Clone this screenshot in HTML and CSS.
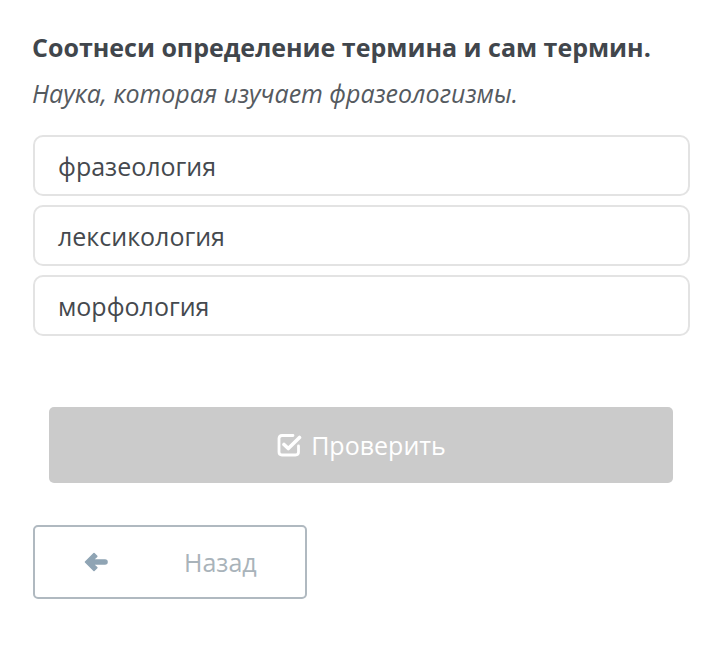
FILE: index.html
```html
<!DOCTYPE html>
<html lang="ru">
<head>
<meta charset="utf-8">
<link rel="stylesheet" href="styles.css">
</head>
<body>
<div class="page">
  <h1 class="title">Соотнеси определение термина и сам термин.</h1>
  <p class="subtitle">Наука, которая изучает фразеологизмы.</p>
  <div class="options">
    <div class="option">фразеология</div>
    <div class="option">лексикология</div>
    <div class="option">морфология</div>
  </div>
  <div class="check-wrap">
    <div class="check-btn">
      <svg class="check-icon" viewBox="0 0 26 26" width="26" height="26">
        <path d="M17 3.5 L6 3.5 Q3 3.5 3 6.5 L3 20 Q3 23 6 23 L19.5 23 Q22.5 23 22.5 20 L22.5 14" fill="none" stroke="#fff" stroke-width="2.8" stroke-linecap="round"/>
        <path d="M8 12.5 L12.3 16.5 L23.5 5.5" fill="none" stroke="#fff" stroke-width="3.6" stroke-linecap="round" stroke-linejoin="round"/>
      </svg>
      <span>Проверить</span>
    </div>
  </div>
  <div class="back-btn">
    <svg class="arrow" viewBox="0 0 26 24" width="26" height="24">
      <path d="M2.5 12 L11 3.5 L13.8 6.3 L9.8 10 L22 10 Q24 10 24 12 Q24 14 22 14 L9.8 14 L13.8 17.7 L11 20.5 Z" fill="#8fa4b4" stroke="#8fa4b4" stroke-width="1.6" stroke-linejoin="round"/>
    </svg>
    <span class="back-text">Назад</span>
  </div>
</div>
</body>
</html>
```
FILE: styles.css
```css
html, body {
  margin: 0;
  padding: 0;
  background: #fff;
}
body {
  font-family: "Open Sans", "Noto Sans", sans-serif;
  color: #444a50;
}
.page {
  padding: 30px 30px 0 32px;
}
.title {
  margin: 0;
  font-size: 25px;
  font-weight: 700;
  line-height: 34px;
  color: #41464c;
}
.subtitle {
  margin: 12px 0 0 0;
  font-size: 25px;
  font-style: italic;
  line-height: 34px;
  color: #555a5f;
}
.options {
  margin-top: 25px;
  display: flex;
  flex-direction: column;
  gap: 9px;
}
.option {
  height: 57px;
  border: 2px solid #e3e3e3;
  border-radius: 10px;
  margin-left: 1px;
  padding-left: 23px;
  display: flex;
  align-items: center;
  font-size: 25px;
  color: #45494e;
}
.check-wrap {
  margin-top: 71px;
  padding: 0 17px;
}
.check-btn {
  height: 76px;
  background: #cbcbcb;
  border-radius: 5px;
  display: flex;
  align-items: center;
  justify-content: center;
  gap: 9px;
  color: #fff;
  font-size: 25px;
}
.check-icon {
  display: block;
}
.back-btn {
  margin-top: 42px;
  margin-left: 1px;
  width: 270px;
  height: 70px;
  border: 2px solid #b0b9c0;
  border-radius: 5px;
  display: flex;
  align-items: center;
  box-sizing: content-box;
}
.arrow {
  margin-left: 48px;
  display: block;
}
.back-text {
  margin-left: 75px;
  font-size: 25px;
  color: #a9b3ba;
}
```
